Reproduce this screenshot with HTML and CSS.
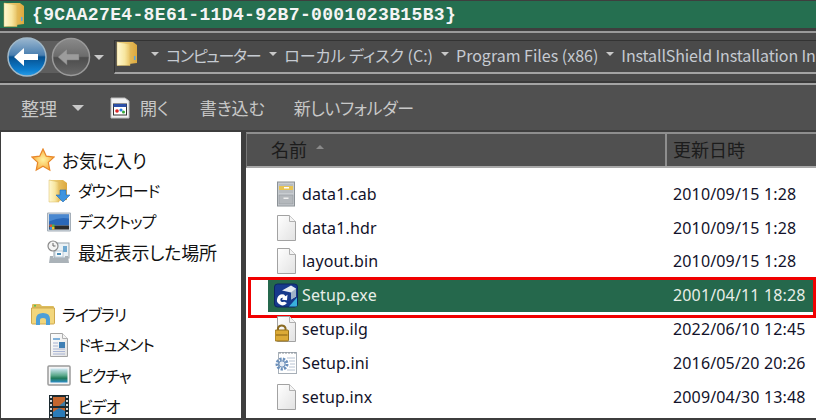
FILE: index.html
```html
<!DOCTYPE html>
<html lang="ja">
<head>
  <meta charset="UTF-8" />
  <title>{9CAA27E4-8E61-11D4-92B7-0001023B15B3}</title>
  <link rel="stylesheet" href="styles.css">
</head>
<body>

  <svg class="defs" width="0" height="0">
    <defs>
      <linearGradient id="folderBack" x1="0" y1="0" x2="1" y2="0">
        <stop offset="0" stop-color="#f6dd8a"/><stop offset="1" stop-color="#dca83e"/>
      </linearGradient>
      <linearGradient id="folderFront" x1="0" y1="0" x2="1" y2="0">
        <stop offset="0" stop-color="#fff8d2"/><stop offset="0.6" stop-color="#f7e6a0"/><stop offset="1" stop-color="#e8c264"/>
      </linearGradient>
      <linearGradient id="sheet" x1="0" y1="0" x2="1" y2="1">
        <stop offset="0" stop-color="#ffffff"/><stop offset="1" stop-color="#e2e2e2"/>
      </linearGradient>
      <linearGradient id="backBall" x1="0" y1="0" x2="0" y2="1">
        <stop offset="0" stop-color="#9cb8d0"/><stop offset="0.45" stop-color="#4a7fb0"/>
        <stop offset="0.5" stop-color="#06508f"/><stop offset="0.85" stop-color="#0d7fd0"/><stop offset="1" stop-color="#2a9ee8"/>
      </linearGradient>
      <linearGradient id="forwardBall" x1="0" y1="0" x2="0" y2="1">
        <stop offset="0" stop-color="#8a8a8a"/><stop offset="0.48" stop-color="#6c6c6c"/>
        <stop offset="0.52" stop-color="#4c4c4c"/><stop offset="1" stop-color="#686868"/>
      </linearGradient>
      <radialGradient id="starFill" cx="0.5" cy="0.5" r="0.6">
        <stop offset="0" stop-color="#fff2a0"/><stop offset="1" stop-color="#f7a432"/>
      </radialGradient>
      <linearGradient id="sea" x1="0" y1="0" x2="0" y2="1">
        <stop offset="0" stop-color="#cfe8f4"/><stop offset="0.5" stop-color="#5aa88a"/>
        <stop offset="0.7" stop-color="#1f7a58"/><stop offset="1" stop-color="#2f8ec8"/>
      </linearGradient>

      <symbol id="folder" viewBox="0 0 22 25">
        <path d="M1 1h16l4 3v18l-20 2.500z" fill="url(#folderBack)"/>
        <path d="M1 1l13 2v21.500l-13 0z" fill="url(#folderFront)" stroke="#d8b860" stroke-width=".5"/>
        <rect x="18" y="15" width="1.500" height="4" fill="#5aa8e0"/>
      </symbol>
      <symbol id="page" viewBox="0 0 22 26">
        <path d="M2.500 .5h12l6 6v19h-18z" fill="url(#sheet)" stroke="#a2a2a2"/>
        <path d="M14.500 .5v6h6" fill="#f4f4f4" stroke="#b0b0b0"/>
      </symbol>
    </defs>
  </svg>

  <header class="titlebar">
    <svg class="title-icon"><use href="#folder"/></svg>
    <span class="title-text">{9CAA27E4-8E61-11D4-92B7-0001023B15B3}</span>
  </header>

  <nav class="addressbar">
    <svg class="nav-buttons" viewBox="0 0 92 44" width="92" height="44">
      <path d="M27 6h44v32h-44z" fill="#5e5e5e"/>
      <circle cx="71" cy="22" r="18.500" fill="url(#forwardBall)" stroke="#9a9a9a" stroke-width="1.500"/>
      <path d="M58 22l9-8v5h12v6h-12v5z" fill="#9c9c9c" stroke="#777" stroke-width=".5"/>
      <circle cx="27" cy="22" r="19" fill="url(#backBall)" stroke="#a0b8c8" stroke-width="1.500"/>
      <path d="M14 22l10-9v6h14v6h-14v6z" fill="#fff"/>
    </svg>
    <i class="arrow arrow-nav"></i>
    <div class="crumbs">
      <svg class="crumb-icon"><use href="#folder"/></svg>
      <i class="arrow"></i><span class="crumb crumb-narrow">コンピューター</span>
      <i class="arrow"></i><span class="crumb">ローカル ディスク (C:)</span>
      <i class="arrow"></i><span class="crumb">Program Files (x86)</span>
      <i class="arrow"></i><span class="crumb crumb-last">InstallShield Installation In</span>
    </div>
  </nav>

  <div class="toolbar">
    <span class="tool tool-sort">整理<i class="arrow arrow-tool"></i></span>
    <span class="tool tool-open">
      <svg class="tool-icon" viewBox="0 0 20 22">
        <path d="M1 1h14l4 3v17h-18z" fill="#f2f2f2" stroke="#bbb"/>
        <rect x="3.500" y="7" width="13" height="11" fill="#fff" stroke="#333"/>
        <rect x="3.500" y="7" width="13" height="3" fill="#2b4fa8"/>
        <circle cx="7" cy="14" r="1.800" fill="#d22"/>
        <circle cx="11" cy="13" r="1.600" fill="#2a7fe0"/>
        <circle cx="13.500" cy="15" r="1.500" fill="#3a3"/>
      </svg>
      開く
    </span>
    <span class="tool tool-burn">書き込む</span>
    <span class="tool tool-new">新しいフォルダー</span>
  </div>

  <main class="panes">
    <aside class="sidebar">
      <div class="tree-group">
        <div class="tree-head">
          <svg class="tree-icon" viewBox="0 0 24 24">
            <path d="M12 1l3.300 7.200 7.700.9-5.700 5.300 1.500 7.800-6.800-3.900-6.800 3.900 1.500-7.800L1 9.100l7.700-.9z" fill="url(#starFill)" stroke="#e8872a" stroke-width="1.200"/>
          </svg>
          お気に入り
        </div>
        <div class="tree-item kana">
          <svg class="tree-icon" viewBox="0 0 24 24">
            <path d="M2 1h14l4 3v17l-18 2z" fill="url(#folderBack)"/>
            <path d="M2 1l10 2v20h-10z" fill="url(#folderFront)" stroke="#d8b860" stroke-width=".5"/>
            <path d="M13 11h6v5h4l-7 7-7-7h4z" fill="#3d94e0" stroke="#1f6cb8" stroke-width=".6"/>
          </svg>
          ダウンロード
        </div>
        <div class="tree-item kana">
          <svg class="tree-icon" viewBox="0 0 24 24">
            <path d="M.5 3h23v18h-23z" fill="#d4dbe2" stroke="#a4aeb8"/>
            <rect x="2" y="4.500" width="20" height="11" fill="#2b68b8"/>
            <path d="M2 4.500h20v4q-10-2-20 3z" fill="#4a88d0"/>
            <rect x="2" y="15.500" width="20" height="4" fill="#2c2c2c"/>
            <rect x="2.500" y="14.500" width="2.500" height="2.500" fill="#e05a30"/>
            <rect x="5" y="14.500" width="2.500" height="2.500" fill="#60b040"/>
            <rect x="2.500" y="17" width="2.500" height="2.500" fill="#3a8ee0"/>
            <rect x="5" y="17" width="2.500" height="2.500" fill="#f0c030"/>
          </svg>
          デスクトップ
        </div>
        <div class="tree-item">
          <svg class="tree-icon" viewBox="0 0 24 24">
            <rect x="7" y="3" width="15" height="15" fill="#eaf1f5" stroke="#98a4ac"/>
            <rect x="16" y="6" width="4" height="6" fill="#6ea8d0"/>
            <rect x="8" y="11" width="8" height="6" fill="#f8fbfd" stroke="#9ab0c0" stroke-width=".6"/>
            <rect x="10" y="13" width="4" height="2" fill="#4f90b8"/>
            <path d="M3 16h3v2h12v-2h3l1 7h-20z" fill="#aab2b8"/>
            <circle cx="6" cy="6" r="5" fill="#f4f4f4" stroke="#8a8a8a" stroke-width="1.200"/>
            <path d="M6 3v3h2.500" fill="none" stroke="#666"/>
          </svg>
          最近表示した場所
        </div>
      </div>

      <div class="tree-group tree-library">
        <div class="tree-head kana">
          <svg class="tree-icon" viewBox="0 0 24 24">
            <path d="M1 3q0-1 1-1h7l2 2h11q1 0 1 1v3h-22z" fill="#dcbc5c"/>
            <circle cx="4" cy="3.800" r="1" fill="#50c050"/>
            <path d="M.5 6h23v15q0 1-1 1h-21q-1 0-1-1z" fill="#f2d67c" stroke="#cfa94e"/>
            <path d="M5 23v-6q0-6 7-6t7 6v6h-4v-5q0-2-3-2t-3 2v5z" fill="#4d9fd8"/>
          </svg>
          ライブラリ
        </div>
        <div class="tree-item kana">
          <svg class="tree-icon" viewBox="0 0 24 24">
            <path d="M3.500 .5h12l5 5v18h-17z" fill="url(#sheet)" stroke="#a4a4a4"/>
            <path d="M15.500 .5v5h5" fill="#f4f4f4" stroke="#b0b0b0"/>
            <rect x="12" y="9" width="6" height="6" fill="#3f7fb4"/>
            <path d="M6 6h7" stroke="#5a9ad0" stroke-width="1.500"/>
            <path d="M6 10h5M6 13h5M6 16h12M6 18.500h12M6 21h12" stroke="#a8b4d4"/>
          </svg>
          ドキュメント
        </div>
        <div class="tree-item kana">
          <svg class="tree-icon" viewBox="0 0 24 24">
            <rect x="1" y="3" width="22" height="19" rx="1" fill="#f4f4f4" stroke="#9a9a9a" stroke-width="1.500"/>
            <rect x="3.500" y="5.500" width="17" height="14" fill="url(#sea)"/>
          </svg>
          ピクチャ
        </div>
        <div class="tree-item kana">
          <svg class="tree-icon" viewBox="0 0 24 24">
            <rect x="2" y="1" width="20" height="24" fill="#1c2a30"/>
            <rect x="6" y="3" width="12" height="9" fill="#3b7ca8"/>
            <path d="M6 3h12v4l-6 5h-6z" fill="#c4662e"/>
            <rect x="6" y="14" width="12" height="9" fill="#c4662e"/>
            <path d="M6 18l6-4 6 3v6h-12z" fill="#2b7cb8"/>
            <path d="M4 2v22M20 2v22" stroke="#d8d8d8" stroke-width="2" stroke-dasharray="2 2"/>
          </svg>
          ビデオ
        </div>
      </div>
    </aside>

    <section class="files">
      <div class="columns">
        <div class="col col-name">名前<i class="sort-arrow"></i></div>
        <div class="col col-date">更新日時</div>
      </div>

      <div class="file-list">
        <div class="file-row">
          <div class="file-name">
            <svg class="file-icon" viewBox="0 0 22 26">
              <rect x="2.500" y="1" width="17" height="24" fill="#c8ccd0" stroke="#8b9196"/>
              <rect x="4" y="3" width="14" height="9" fill="#b8bcc0"/>
              <path d="M4 5h14v4h-14z" fill="#e8c453"/>
              <rect x="9" y="6" width="5" height="1.500" fill="#fff"/>
              <rect x="4" y="14" width="14" height="9" fill="#b4b8bc" stroke="#8b9196" stroke-width=".5"/>
              <rect x="8.500" y="16.500" width="5" height="1.500" fill="#eee"/>
            </svg>
            data1.cab
          </div>
          <div class="file-date">2010/09/15 1:28</div>
        </div>
        <div class="file-row">
          <div class="file-name"><svg class="file-icon"><use href="#page"/></svg>data1.hdr</div>
          <div class="file-date">2010/09/15 1:28</div>
        </div>
        <div class="file-row">
          <div class="file-name"><svg class="file-icon"><use href="#page"/></svg>layout.bin</div>
          <div class="file-date">2010/09/15 1:28</div>
        </div>
        <div class="file-row selected">
          <div class="file-name">
            <svg class="file-icon file-icon-setup" viewBox="0 0 24 24">
              <rect x="0.500" y="0.500" width="23" height="23" rx="3" fill="#173a8c" stroke="#0d2560"/>
              <path d="M8 7l9-5 5 3v8l-5 3v-7z" fill="#e4eaf2"/>
              <path d="M17 9l5-4v8l-5 3z" fill="#9fb2c8"/>
              <path d="M15 23l8-9v8q0 1-1 1z" fill="#38b0dc"/>
              <path d="M10 11a5.500 5.500 0 1 0 3 8.500l-3-1.500a2.200 2.200 0 1 1-1-3.800l-1 2 5 .5.500-5.500-2 1.500z" fill="#fff"/>
            </svg>
            Setup.exe
          </div>
          <div class="file-date">2001/04/11 18:28</div>
        </div>
        <div class="file-row">
          <div class="file-name">
            <svg class="file-icon" viewBox="0 0 22 26">
              <use href="#page" width="22" height="26"/>
              <path d="M3 17v-5a4 4 0 0 1 7.500 0v5" fill="none" stroke="#8a6a20" stroke-width="2"/>
              <rect x="0" y="14" width="13.500" height="11" rx="1" fill="#dcaa36" stroke="#94701c"/>
              <rect x="1" y="18" width="11.500" height="2" fill="#b08424"/>
            </svg>
            setup.ilg
          </div>
          <div class="file-date">2022/06/10 12:45</div>
        </div>
        <div class="file-row">
          <div class="file-name">
            <svg class="file-icon" viewBox="0 0 22 26">
              <rect x="3.500" y="2.500" width="18" height="21" fill="#fff" stroke="#a8b0b8"/>
              <path d="M5 2v2M8 2v2M11 2v2M14 2v2M17 2v2M20 2v2" stroke="#889098"/>
              <path d="M12 8h8M14 11h6M15 14h5M14 17h6M12 20h8" stroke="#b8c4d4"/>
              <circle cx="7" cy="14" r="5" fill="none" stroke="#6b90bc" stroke-width="3" stroke-dasharray="2.200 1.200"/>
              <circle cx="7" cy="14" r="3.200" fill="#e6ecf4" stroke="#5f86b4"/>
            </svg>
            Setup.ini
          </div>
          <div class="file-date">2016/05/20 20:26</div>
        </div>
        <div class="file-row">
          <div class="file-name"><svg class="file-icon"><use href="#page"/></svg>setup.inx</div>
          <div class="file-date">2009/04/30 13:48</div>
        </div>
      </div>
    </section>
  </main>

</body>
</html>
```

FILE: styles.css
```css
* { box-sizing: border-box; margin: 0; padding: 0; }
html, body { width: 816px; height: 420px; overflow: hidden; }
body {
  background: #3e3e3e;
  font-family: "Noto Sans CJK JP", "Noto Sans", sans-serif;
  font-feature-settings: "palt";
  font-size: 17px;
}
i { display: block; }
.defs { position: absolute; }
svg { filter: blur(0.3px); }

/* title */
.titlebar {
  height: 27px;
  margin-top: 1px;
  background: #256f50;
  display: flex;
  align-items: center;
  padding-left: 3px;
  gap: 7px;
}
.title-icon { width: 22px; height: 25px; flex: none; }
.title-text {
  font-family: "Liberation Mono", monospace;
  font-weight: bold;
  font-size: 18px;
  letter-spacing: 0.36px;
  color: #f4f4f4;
  font-feature-settings: normal;
}

/* address */
.addressbar {
  height: 52px;
  margin-top: 3px;
  background: #4a4a4a;
  border-top: 2px solid #9a9a9a;
  border-bottom: 2px solid #3a3a3a;
  display: flex;
  align-items: center;
  color: #c6cbd2;
  box-shadow: 0 2px 0 #a4a4a4;
}
.nav-buttons { flex: none; }
.arrow {
  width: 0;
  height: 0;
  border-left: 5px solid transparent;
  border-right: 5px solid transparent;
  border-top: 5px solid #c8c8c8;
  flex: none;
}
.arrow-nav { margin: 0 10px 0 2px; }
.crumbs {
  flex: 1;
  height: 34px;
  padding-bottom: 3px;
  display: flex;
  align-items: center;
  gap: 7px;
  white-space: nowrap;
  overflow: hidden;
  border-top: 1px solid #333;
  border-left: 1px solid #333;
  border-bottom: 2px solid #a4a4a4;
  font-size: 16px;
}
.crumbs .arrow {
  border-left-width: 4px;
  border-right-width: 4px;
  border-top-width: 4px;
  margin-bottom: 2px;
}
.crumb-icon { width: 22px; height: 25px; margin: 0 6px 3px 1px; flex: none; }
.crumb { margin-right: 1px; }
.crumb-narrow { letter-spacing: -1.300px; margin-right: 2px; }
.crumb-last { letter-spacing: -0.120px; }

/* toolbar */
.toolbar {
  height: 45px;
  margin-top: 2px;
  background: #505050;
  display: flex;
  align-items: center;
  padding-left: 21px;
  color: #c8c8c8;
}
.tool { display: flex; align-items: center; white-space: nowrap; }
.tool-sort { font-size: 18px; }
.arrow-tool { margin-left: 15px; border-left-width: 6px; border-right-width: 6px; border-top-width: 6px; }
.tool-open { margin-left: 26px; gap: 10px; }
.tool-icon { width: 20px; height: 22px; }
.tool-burn { margin-left: 31px; }
.tool-new { margin-left: 29px; letter-spacing: -0.400px; }

/* panes */
.panes {
  height: 286px;
  margin-top: 2px;
  display: flex;
  gap: 5px;
  padding-left: 1px;
}
.sidebar {
  width: 240px;
  background: #fff;
  color: #111;
  padding-top: 13px;
  overflow: hidden;
  font-size: 18px;
  letter-spacing: -0.200px;
  line-height: 1.2;
}
.tree-head, .tree-item {
  height: 30.700px;
  display: flex;
  align-items: center;
  white-space: nowrap;
}
.tree-head { padding-left: 30px; gap: 7px; }
.tree-item { padding-left: 46px; gap: 7px; }
.kana { font-size: 16px; letter-spacing: -1px; }
.tree-icon { width: 24px; height: 24px; flex: none; }
.tree-library { margin-top: 31px; }

.files { flex: 1; background: #fff; }
.columns {
  height: 36px;
  background: #505050;
  border-top: 2px solid #8e8e8e;
  border-bottom: 2px solid #a8a8a8;
  border-left: 1px solid #777;
  display: flex;
  color: #1c1c1c;
  font-size: 18px;
}
.col { display: flex; align-items: center; padding-bottom: 3px; }
.col-name { width: 418px; padding-left: 24px; }
.col-date { flex: 1; padding-left: 6px; border-left: 2px solid #8e8e8e; }
.sort-arrow {
  margin-left: 9px;
  margin-bottom: 4px;
  border-left: 4px solid transparent;
  border-right: 4px solid transparent;
  border-bottom: 4px solid #8a8a8a;
}

.file-list { padding-top: 9px; }
.file-row {
  height: 33.800px;
  margin: 0 2px 0 22px;
  padding-left: 7px;
  display: flex;
  align-items: center;
  position: relative;
  font-family: "Noto Sans", sans-serif;
  font-size: 16px;
  letter-spacing: 0.150px;
  color: #12122a;
}
.file-name { width: 398px; display: flex; align-items: center; gap: 5px; }
.file-icon { width: 22px; height: 26px; flex: none; }
.file-icon-setup { width: 24px; height: 25px; margin: 0 -1px; }
.file-date { white-space: nowrap; }
.file-row.selected { background: #25684c; color: #e8eee8; }
.file-row.selected::after {
  content: "";
  position: absolute;
  top: -1.500px;
  left: -20px;
  right: -2px;
  bottom: -6px;
  border: 3px solid #f00000;
}
```
